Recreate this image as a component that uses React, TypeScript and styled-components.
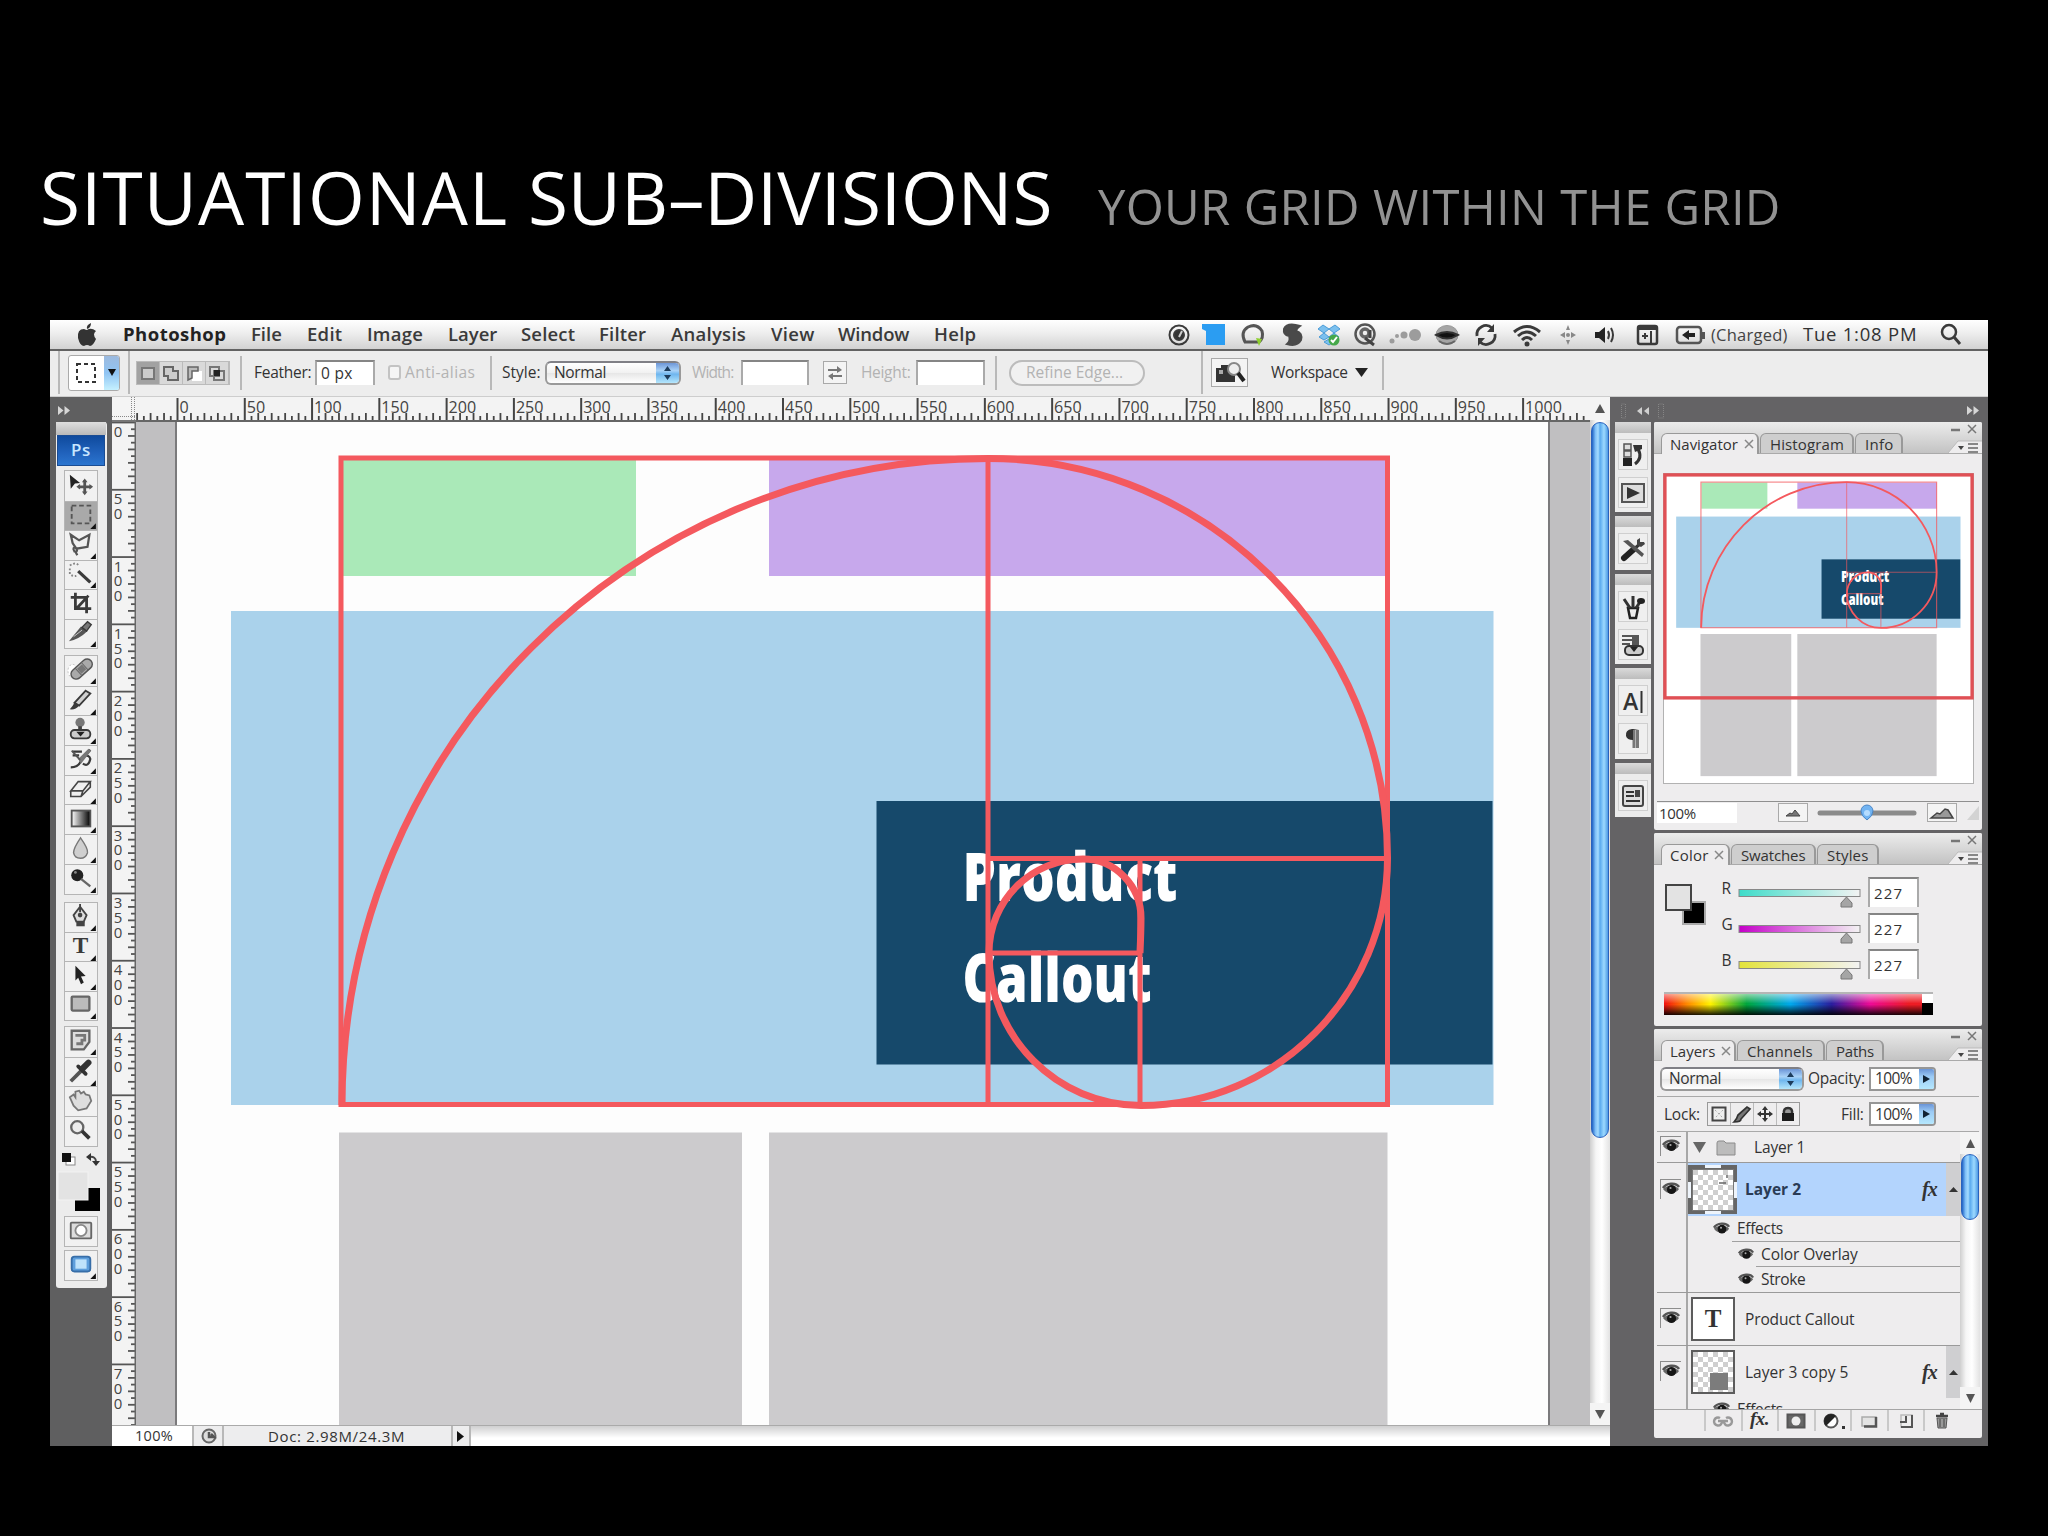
import React, { useLayoutEffect, useRef, useState, ReactNode } from "react";
import styled, { createGlobalStyle, css } from "styled-components";

const Global = createGlobalStyle`
  html, body { margin: 0; padding: 0; background: #000; }
  * { box-sizing: border-box; }
  body { font-family: "Open Sans", "Noto Sans", sans-serif; overflow: hidden; }
  svg { display: block; flex: none; overflow: visible; }
`;

/* ---------- text that tracks out to a given measure ---------- */
const FitSpan = styled.span<{ $size: number; $weight?: number; $color?: string; $gap?: number; $w: number }>`
  display: block;
  flex: none;
  width: ${(p) => p.$w}px;
  margin-left: ${(p) => p.$gap ?? 0}px;
  font-size: ${(p) => p.$size}px;
  font-weight: ${(p) => p.$weight ?? 400};
  color: ${(p) => p.$color ?? "#333"};
  line-height: 1.2;
  white-space: nowrap;
  & > span { display: inline-block; }
`;

type FitProps = { w: number; size?: number; weight?: number; color?: string; gap?: number; children: string };
function Fit({ w, size = 15.5, weight = 500, color, gap, children }: FitProps) {
  const ref = useRef<HTMLSpanElement>(null);
  const [tracking, setTracking] = useState(0);
  useLayoutEffect(() => {
    if (ref.current) setTracking((w - ref.current.offsetWidth) / (children.length - 0.5));
  }, [w, children]);
  return (
    <FitSpan $w={w} $size={size} $weight={weight} $color={color} $gap={gap}>
      <span ref={ref} style={{ letterSpacing: tracking }}>{children}</span>
    </FitSpan>
  );
}

/* ---------- frame ---------- */
const Slide = styled.main`
  width: 2048px;
  height: 1536px;
  background: #000;
  display: flex;
  flex-direction: column;
`;
const Heading = styled.header`
  height: 320px;
  padding: 152.5px 0 0 40px;
  display: flex;
  align-items: baseline;
`;
const Screen = styled.section`
  width: 1938px;
  height: 1126px;
  margin-left: 50px;
  display: flex;
  flex-direction: column;
  overflow: hidden;
  background: #5f5f60;
`;
const MenuBar = styled.nav`
  height: 31px;
  flex: none;
  display: flex;
  align-items: center;
  background: linear-gradient(#fff, #eee 45%, #d2d2d2);
  border-bottom: 2px solid #626262;
`;
const OptionsBar = styled.div`
  height: 46px;
  flex: none;
  display: flex;
  align-items: center;
  padding-bottom: 2px;
  background: #ededed;
  border-bottom: 1px solid #cdcdcd;
`;
const Item = styled.div<{ $gap?: number; $w?: number }>`
  flex: none;
  display: flex;
  justify-content: center;
  align-items: center;
  margin-left: ${(p) => p.$gap ?? 0}px;
  width: ${(p) => (p.$w ? p.$w + "px" : "auto")};
`;
const Divider = styled.div<{ $gap: number; $h?: number }>`
  flex: none;
  width: 2px;
  height: ${(p) => p.$h ?? 34}px;
  margin-left: ${(p) => p.$gap}px;
  background: #b9b9b9;
`;
const Field = styled.div<{ $gap?: number; $w: number; $h?: number }>`
  flex: none;
  display: flex;
  align-items: center;
  padding-left: 4px;
  width: ${(p) => p.$w}px;
  height: ${(p) => p.$h ?? 25}px;
  margin-left: ${(p) => p.$gap ?? 0}px;
  background: #fff;
  border: 2px solid #aaa;
  border-top-color: #858585;
  border-bottom: 0;
`;
const Select = styled.div<{ $gap?: number; $w: number }>`
  flex: none;
  display: flex;
  align-items: center;
  width: ${(p) => p.$w}px;
  height: 24px;
  margin-left: ${(p) => p.$gap ?? 0}px;
  padding-left: 7px;
  border: 2px solid #9a9a9a;
  border-top-color: #808086;
  border-radius: 6px;
  background: linear-gradient(#fff, #f1f1f1 50%, #e6e6e6 51%, #fff);
  overflow: hidden;
`;
const Stepper = styled.div`
  margin-left: auto;
  width: 23px;
  height: 24px;
  flex: none;
  display: grid;
  place-items: center;
  background: linear-gradient(#5d86cf, #a9d2f7 40%, #6fb6ee 55%, #c5f1ff);
`;
const ToolPreset = styled.div`
  width: 52px;
  height: 36px;
  margin-left: 8px;
  flex: none;
  display: flex;
  align-items: center;
  border: 1px solid #aaa;
  border-radius: 3px;
  background: #fff;
  overflow: hidden;
`;
const PresetArrow = styled.div`
  width: 15px;
  height: 36px;
  margin-left: auto;
  display: grid;
  place-items: center;
  background: linear-gradient(#9db9dd, #8fc4f3 50%, #c9f3ff);
`;
const ModeGroup = styled.div`
  display: flex;
  width: 94px;
  height: 24px;
  margin-left: 6px;
  flex: none;
  border: 1px solid #bbb;
`;
const ModeCell = styled.div<{ $on?: boolean }>`
  flex: 1;
  display: grid;
  place-items: center;
  border-right: 1px solid #bbb;
  background: ${(p) => (p.$on ? "#a2a2a2" : "#d9d9d9")};
`;
const CheckBox = styled.div`
  width: 13px;
  height: 15px;
  flex: none;
  margin-left: 13px;
  border: 2px solid #c3c3c3;
  border-radius: 3px;
  background: #f5f5f5;
`;
const IconBox = styled.div<{ $gap: number; $w: number; $h: number }>`
  width: ${(p) => p.$w}px;
  height: ${(p) => p.$h}px;
  margin-left: ${(p) => p.$gap}px;
  flex: none;
  display: grid;
  place-items: center;
  border: 1px solid #a9a9a9;
  background: #f4f4f4;
`;
const Pill = styled.div`
  width: 136px;
  height: 26px;
  margin-left: 12px;
  padding-left: 15px;
  flex: none;
  display: flex;
  align-items: center;
  border: 2px solid #bcbcbc;
  border-radius: 13px;
  background: #f1f1f1;
`;

const Body = styled.div`
  flex: 1;
  display: flex;
  min-height: 0;
`;
const ToolDock = styled.aside`
  width: 62px;
  flex: none;
  padding-left: 6px;
  background: #5f5f60;
`;
const DockHead = styled.div<{ $pl?: number }>`
  height: 25px;
  display: flex;
  align-items: center;
  padding: 2px 5px 0 ${(p) => p.$pl ?? 0}px;
`;
const ToolPanel = styled.div`
  width: 51px;
  height: 866px;
  background: #ececec;
  border-radius: 3px;
  display: flex;
  flex-direction: column;
  align-items: center;
  padding-right: 1px;
`;
const PanelGrip = styled.div`
  width: 100%;
  height: 13px;
  flex: none;
  background: linear-gradient(#dedede, #b9b9b9);
`;
const PsBadge = styled.div`
  width: 48px;
  height: 31px;
  flex: none;
  display: grid;
  place-items: center;
  background: linear-gradient(#0f4a9d, #2163bd 60%, #2b75cf);
  border: 1px solid #1a4c93;
`;
const ToolGroup = styled.div<{ $gap: number }>`
  width: 34px;
  margin-top: ${(p) => p.$gap}px;
  border: 1px solid #b5b5b5;
  flex: none;
`;
const ToolCell = styled.div<{ $h: number; $on?: boolean }>`
  height: ${(p) => p.$h}px;
  display: flex;
  align-items: center;
  justify-content: center;
  padding: 0 1px 2px 0;
  background: ${(p) => (p.$on ? "#a9a9a9" : "#f1f1f1")};
  & + & { border-top: 1px solid #b5b5b5; }
`;
const SwapRow = styled.div`
  display: flex;
  justify-content: space-between;
  width: 38px;
  margin-top: 6px;
  flex: none;
`;
const Swatches = styled.div`
  margin-top: 5px;
  flex: none;
`;

const DocWindow = styled.section`
  width: 1498px;
  flex: none;
  display: flex;
  flex-direction: column;
`;
const DocRow = styled.div<{ $h: number }>`
  height: ${(p) => p.$h}px;
  flex: none;
  display: flex;
  overflow: hidden;
`;
const Pasteboard = styled.div`
  width: 1454px;
  height: 1005px;
  flex: none;
  display: flex;
  justify-content: space-between;
  background: #c0bfc1;
  padding: 0 40px 0 39px;
`;
const Sheet = styled.div`
  width: 1376px;
  border: solid #7b7a7c;
  border-width: 0 2px;
  background: #fdfdfd;
  overflow: hidden;
`;
const ScrollTrack = styled.div`
  width: 20px;
  flex: none;
  display: flex;
  flex-direction: column;
  background: linear-gradient(90deg, #cfcfcf, #f6f6f6 30%, #fff 60%, #e2e2e2);
`;
const ScrollThumb = styled.div<{ $h: number }>`
  width: 18px;
  height: ${(p) => p.$h}px;
  margin: 0 auto;
  border-radius: 9px;
  border: 1px solid #2a62bd;
  background: linear-gradient(90deg, #1f62c4, #7fc0f8 22%, #a6dcff 38%, #59a9ee 50%, #9cd9ff 75%, #4d9ae4);
  flex: none;
`;
const ScrollArrow = styled.div<{ $push?: boolean; $h?: number }>`
  height: ${(p) => p.$h ?? 22}px;
  flex: none;
  width: 100%;
  margin-top: ${(p) => (p.$push ? "auto" : 0)};
  display: grid;
  place-items: center;
  background: #f4f4f4;
`;
const StatusBar = styled.footer`
  height: 21px;
  flex: none;
  display: flex;
  align-items: stretch;
  border-top: 1px solid #aaa;
  background: linear-gradient(#cfcfd0, #fff 60%);
`;
const StatusCell = styled.div<{ $w: number; $bg?: string; $pl?: number }>`
  width: ${(p) => p.$w}px;
  padding-left: ${(p) => p.$pl ?? 0}px;
  display: flex;
  align-items: center;
  background: ${(p) => p.$bg ?? "#ededee"};
  border-right: 2px solid #b8b8b8;
  flex: none;
`;

const RightDock = styled.aside`
  flex: 1;
  display: flex;
  flex-direction: column;
  background: #646365;
`;
const DockCols = styled.div`
  display: flex;
  align-items: flex-start;
  padding-left: 5px;
  gap: 2px;
`;
const IconStrip = styled.div`
  width: 37px;
  flex: none;
  display: flex;
  flex-direction: column;
  gap: 4px;
`;
const StripGroup = styled.div<{ $h: number }>`
  width: 36px;
  height: ${(p) => p.$h}px;
  background: #ececec;
  display: flex;
  flex-direction: column;
  align-items: center;
  justify-content: flex-start;
  gap: 7px;
`;
const StripGrip = styled.div`
  width: 100%;
  height: 11px;
  margin-bottom: -1px;
  flex: none;
  background: linear-gradient(#dadada, #bcbcbc);
`;
const StripButton = styled.div`
  width: 30px;
  height: 31px;
  flex: none;
  display: grid;
  place-items: center;
  border: 1px solid #cfcfcf;
  background: #efefef;
`;
const Panels = styled.div`
  width: 328px;
  flex: none;
  display: flex;
  flex-direction: column;
  gap: 3px;
`;
const Panel = styled.section<{ $h: number }>`
  height: ${(p) => p.$h}px;
  flex: none;
  background: #eeedee;
  display: flex;
  flex-direction: column;
  border-radius: 2px;
  overflow: hidden;
`;
const TabStrip = styled.div`
  height: 32px;
  flex: none;
  display: flex;
  align-items: flex-end;
  padding-left: 7px;
  background: linear-gradient(#ececec, #c3c3c3);
  border-bottom: 1px solid #aaa;
`;
const Tab = styled.div<{ $w: number; $on?: boolean }>`
  width: ${(p) => p.$w}px;
  height: ${(p) => (p.$on ? 21 : 20)}px;
  margin-right: 1px;
  margin-bottom: ${(p) => (p.$on ? -1 : 0)}px;
  flex: none;
  display: flex;
  align-items: center;
  gap: 6px;
  padding-left: ${(p) => (p.$on ? 8 : 9)}px;
  border: 1px solid #999;
  border-width: 1px 2px 0 1px;
  border-radius: 6px 6px 0 0;
  background: ${(p) => (p.$on ? "#eeedee" : "#cecece")};
`;
const TabTail = styled.div`
  margin-left: auto;
  height: 32px;
`;
const NavThumb = styled.div`
  width: 311px;
  height: 311px;
  margin: 19px 0 0 9px;
  border: 1px solid #b2b2b2;
  background: #fff;
  flex: none;
`;
const NavFooter = styled.div`
  height: 22px;
  margin: 17px 3px 0 3px;
  display: flex;
  align-items: center;
  border-top: 1px solid #8f8f8f;
`;
const ZoomField = styled.div`
  width: 80px;
  height: 20px;
  flex: none;
  background: #fff;
  display: flex;
  align-items: center;
  padding-left: 2px;
`;
const ColorBody = styled.div`
  display: flex;
  height: 126px;
  padding: 12px 0 0 10px;
`;
const ColorRows = styled.div`
  margin-left: 10px;
  display: flex;
  flex-direction: column;
  gap: 6px;
`;
const ColorRow = styled.div`
  display: flex;
  height: 30px;
  align-items: center;
`;
const ChannelLabel = styled.div`
  width: 16px;
  height: 26px;
  display: grid;
  place-items: start center;
`;
const Spectrum = styled.div`
  width: 269px;
  height: 23px;
  margin-left: 10px;
  margin-top: 1px;
  display: flex;
  border-top: 2px solid #b5b5b5;
`;
const Hues = styled.div`
  flex: 1;
  background: linear-gradient(rgba(255,255,255,.55), rgba(255,255,255,0) 45%, rgba(0,0,0,0) 50%, rgba(0,0,0,.9)),
    linear-gradient(90deg, #f01010, #ff8a00 9%, #fff200 18%, #00a63c 32%, #00a8ec 49%, #2a1e9e 65%, #ee0a96 80%, #ee1c24 95%);
`;
const SpectrumEnds = styled.div`
  width: 11px;
  background: linear-gradient(#fff 45%, #000 45%);
`;
const LayerControls = styled.div<{ $h: number }>`
  height: ${(p) => p.$h}px;
  flex: none;
  margin: 0 3px;
  display: flex;
  align-items: center;
  border-bottom: 1px solid #a9a9a9;
`;
const PercentBox = styled.div<{ $gap: number }>`
  width: 67px;
  height: 24px;
  margin-left: ${(p) => p.$gap}px;
  padding-left: 4px;
  flex: none;
  display: flex;
  align-items: center;
  border: 2px solid #969696;
  border-radius: 0 4px 4px 0;
  background: #fff;
  overflow: hidden;
`;
const PercentArrow = styled.div`
  margin-left: auto;
  width: 15px;
  height: 24px;
  display: grid;
  place-items: center;
  background: linear-gradient(#5d86cf, #9ccbf5 40%, #b9ecff);
`;
const LockGroup = styled.div`
  display: flex;
  width: 93px;
  height: 24px;
  margin-left: 7px;
  border: 1px solid #999;
  flex: none;
`;
const LockCell = styled.div`
  flex: 1;
  display: grid;
  place-items: center;
  & + & { border-left: 1px solid #bbb; }
`;
const LayerArea = styled.div`
  height: 278px;
  flex: none;
  display: flex;
  padding-left: 3px;
  overflow: hidden;
  border-bottom: 1px solid #a5a5a5;
`;
const LayerList = styled.div`
  width: 303px;
  flex: none;
  display: flex;
  flex-direction: column;
`;
const LayerRow = styled.div<{ $h: number }>`
  height: ${(p) => p.$h}px;
  flex: none;
  display: flex;
  border-bottom: 1px solid #9a9a9a;
`;
const EyeCol = styled.div<{ $pad?: number }>`
  width: 31px;
  flex: none;
  border-right: 2px solid #a7a7a7;
  padding: ${(p) => p.$pad ?? 4}px 0 0 3px;
`;
const EyeBox = styled.div`
  width: 21px;
  height: 20px;
  display: grid;
  place-items: center;
  border: solid #8d8d8d;
  border-width: 1px 0 0 1px;
`;
const LayerMain = styled.div`
  flex: 1;
  display: flex;
  flex-direction: column;
`;
const LayerBar = styled.div<{ $h: number; $on?: boolean; $pl?: number }>`
  height: ${(p) => p.$h}px;
  flex: none;
  display: flex;
  align-items: center;
  padding-left: ${(p) => p.$pl ?? 0}px;
  background: ${(p) => (p.$on ? "#b3d4fd" : "transparent")};
`;
const EffectRow = styled.div<{ $indent: number; $line?: boolean; $h?: number }>`
  height: ${(p) => p.$h ?? 25}px;
  flex: none;
  display: flex;
  align-items: center;
  gap: 7px;
  margin-left: ${(p) => p.$indent}px;
  ${(p) => p.$line && css`border-top: 1px solid #a0a0a0;`}
`;
const FxTag = styled.span`
  margin-left: auto;
  width: 24px;
  font: italic bold 20px "Liberation Serif", serif;
  letter-spacing: -1px;
  color: #333;
`;
const FxToggle = styled.div`
  width: 14px;
  height: 100%;
  display: grid;
  place-items: center;
  background: #cfcfd1;
`;
const Thumb = styled.div`
  width: 44px;
  height: 44px;
  margin-left: 3px;
  flex: none;
  display: grid;
  place-items: center;
  border: 2px solid #5c5c5c;
  background: #fff;
  font: bold 25px "Liberation Serif", serif;
  color: #333;
`;
const LayerFooter = styled.div`
  height: 21px;
  padding-left: 50px;
  display: flex;
  flex: none;
`;
const FooterCell = styled.div`
  width: 36.5px;
  display: grid;
  place-items: center;
  border-left: 2px solid #c9c9c9;
`;

/* ---------- glyphs ---------- */
const Tri = ({ d, w = 10, h = 9, c = "#333" }: { d: "up" | "down" | "right"; w?: number; h?: number; c?: string }) => (
  <svg width={w} height={h} viewBox="0 0 10 10" preserveAspectRatio="none">
    <path fill={c} d={d === "up" ? "M5 0L10 10H0Z" : d === "down" ? "M0 0H10L5 10Z" : "M0 0L10 5L0 10Z"} />
  </svg>
);
const Twist = () => (
  <svg width="9" height="16" viewBox="0 0 9 16"><path fill="#1d3c5c" d="M4.500 1L8 6H1ZM1 10H8L4.500 15Z" /></svg>
);
const Chevrons = () => (
  <svg width="12" height="9" viewBox="0 0 12 9"><path fill="#d6d6d6" d="M0 0L5.500 4.500L0 9ZM6.500 0L12 4.500L6.500 9Z" /></svg>
);
const Eye = ({ w = 18 }: { w?: number }) => (
  <svg width={w} height={w * 0.78} viewBox="0 0 18 14">
    <path d="M1 6C4 1 14 0 17 5" fill="none" stroke="#555" strokeWidth="2.500" />
    <path d="M1 7C4 3 14 3 17 7C14 12 5 13 1 7Z" fill="#666" />
    <circle cx="9.500" cy="7.500" r="4.600" fill="#161616" /><circle cx="8.500" cy="6" r="1.100" fill="#aaa" />
  </svg>
);
const CloseX = () => (
  <svg width="10" height="10" viewBox="0 0 10 10"><path d="M1 1L9 9M9 1L1 9" stroke="#888" strokeWidth="1.500" /></svg>
);

const K = "#3a3a3a";
const toolGlyphs: Record<string, ReactNode> = {
  move: <><path d="M5 4L16 13L10.500 13.500L6 19Z" fill="#222" /><path d="M21 10V24M14 17H28" stroke="#555" strokeWidth="3" /><path d="M21 8L24 12H18ZM21 26L24 22H18ZM12 17L16 14V20ZM30 17L26 14V20Z" fill="#555" /></>,
  marquee: <rect x="7" y="5" width="20" height="19" fill="none" stroke="#555" strokeWidth="2" strokeDasharray="5 3" />,
  lasso: <path d="M6 4L15 10L26 4L24 17L12 19L8 13ZM12 18Q7 17 10 22Q14 23 12 18M11 22L13 26" fill="none" stroke="#555" strokeWidth="2.400" />,
  wand: <><path d="M14 12L27 24" stroke={K} strokeWidth="3.500" /><path d="M5 6Q12 1 15 7M5 9V15Q8 18 12 17" fill="none" stroke="#888" strokeWidth="2" strokeDasharray="2 2" /></>,
  crop: <path d="M11 3V20H28M6 8H23V25M13 19L25 6" fill="none" stroke={K} strokeWidth="3" />,
  slice: <><path d="M4 24L17 8L24 13Q15 22 4 24Z" fill="#555" /><path d="M18 9L24 3L28 6L23 13Z" fill="#777" stroke={K} strokeWidth="1.500" /><path d="M9 19L18 12" stroke="#ccc" /></>,
  heal: <><ellipse cx="8" cy="16" rx="5" ry="7" fill="#fff" stroke="#bbb" strokeDasharray="2 2" /><g transform="rotate(-42 17 14)"><rect x="4" y="9" width="27" height="11" rx="5.500" fill="#aaa" stroke="#555" strokeWidth="1.500" /><path d="M13 9V20M22 9V20" stroke="#666" /><rect x="14" y="11" width="7" height="7" fill="#777" /></g></>,
  brush: <><path d="M22 4L27 7L15 20L10 17Z" fill="#d0d0d0" stroke={K} strokeWidth="2" /><path d="M10 17L15 20Q11 25 5 24Q8 21 10 17Z" fill={K} /></>,
  stamp: <><circle cx="16" cy="7" r="5" fill="#777" /><path d="M14 11H18V17H14Z" fill="#444" /><rect x="6" y="15" width="21" height="9" rx="4" fill="#ccc" stroke={K} strokeWidth="2" /><path d="M12 17H21L16.500 22Z" fill="#222" /></>,
  history: <><path d="M8 6H18M8 10H15M6 23Q14 23 17 16L27 4M19 19Q25 23 27 14Q26 9 20 11" fill="none" stroke={K} strokeWidth="2.400" /><path d="M14 14L25 3L28 5L17 19Z" fill="#777" /><path d="M7 5L16 15" stroke="#555" strokeWidth="2" /></>,
  eraser: <path d="M14 6H27L19 16H6ZM6 16V22H17L27 12V6M19 16L17 22" fill="#eee" stroke="#444" strokeWidth="1.700" />,
  blur: <path d="M16.500 3Q25 15 24 19Q22 25 16.500 25Q10 25 9 19Q9 14 16.500 3Z" fill="#cfcfcf" stroke="#777" strokeWidth="1.500" />,
  dodge: <><circle cx="13" cy="11" r="6.500" fill="#222" /><path d="M17 15L27 23" stroke="#666" strokeWidth="2.500" /><circle cx="11" cy="8" r="1.500" fill="#888" /></>,
  pen: <><path d="M16 1V10M12 20L9 13L16 4L23 13L20 20Z" fill="#ddd" stroke="#444" strokeWidth="2" /><rect x="12" y="20" width="9" height="5" fill="#444" /><circle cx="16" cy="13" r="2.500" fill="#444" /></>,
  type: <text x="16.500" y="22" textAnchor="middle" fontFamily="Liberation Serif, serif" fontWeight="bold" fontSize="25" fill={K}>T</text>,
  path: <path d="M11 4L22 15L17 15.500L20 22L17 24L14 17L11 20Z" fill="#222" />,
  shape: <rect x="7" y="6" width="19" height="15" rx="1" fill="#bbb" stroke="#666" strokeWidth="2.500" />,
  notes: <><path d="M7 4H26V16L20 24H7Z" fill="#ddd" stroke="#666" strokeWidth="2.500" /><path d="M11 9H21V14H18V18H12" fill="none" stroke="#777" strokeWidth="3" /></>,
  dropper: <><path d="M6 25L18 13" stroke="#555" strokeWidth="4" /><path d="M14 9L22 17" stroke="#333" strokeWidth="4" strokeLinecap="round" /><path d="M19 11L25 5" stroke="#333" strokeWidth="6.500" strokeLinecap="round" /></>,
  hand: <path d="M5 11L9 8L11 11L11 5L15 4L17 7L20 5L22 8L26 9L28 15L23 23L14 25L9 20Z" fill="#dedede" stroke="#777" strokeWidth="1.900" />,
  zoom: <><circle cx="13" cy="11" r="6.500" fill="#ededed" stroke="#666" strokeWidth="2.500" /><path d="M18 15L26 23" stroke="#333" strokeWidth="4" /></>,
  mask: <><rect x="6" y="6" width="22" height="17" rx="1" fill="#ddd" stroke="#666" strokeWidth="2" /><circle cx="17" cy="14.500" r="6" fill="#fff" stroke="#888" strokeWidth="2" /></>,
  screen: <><rect x="7" y="6" width="20" height="16" rx="3" fill="#5e9fdc" stroke="#376ea8" strokeWidth="2" /><rect x="11" y="9" width="12" height="10" fill="#bfe3fb" /></>,
};
const ToolIcon = ({ name, corner = true }: { name: string; corner?: boolean }) => (
  <svg width="32" height="27" viewBox="0 0 34 29">
    {name === "gradient" ? (
      <><defs><linearGradient id="bw"><stop offset="0" stopColor="#fff" /><stop offset="1" stopColor="#000" /></linearGradient></defs>
        <rect x="7" y="6" width="20" height="17" fill="url(#bw)" stroke="#555" strokeWidth="2" /></>
    ) : toolGlyphs[name]}
    {corner && <path d="M33 24V30H27Z" fill="#111" />}
  </svg>
);
const groups: { gap: number; h: number; tools: string[] }[] = [
  { gap: 4, h: 29.5, tools: ["move", "marquee", "lasso", "wand", "crop", "slice"] },
  { gap: 6, h: 29.7, tools: ["heal", "brush", "stamp", "history", "eraser", "gradient", "blur", "dodge"] },
  { gap: 7, h: 29.4, tools: ["pen", "type", "path", "shape"] },
  { gap: 5, h: 29.7, tools: ["notes", "dropper", "hand", "zoom"] },
];

/* ---------- the document being edited ---------- */
const RED = "#f4595e";
function Artwork({ width, height, viewBox, thin }: { width: number; height: number; viewBox: string; thin?: boolean }) {
  return (
    <svg width={width} height={height} viewBox={viewBox}>
      <rect x="343" y="460" width="293" height="116" fill="#aae9b8" />
      <rect x="769" y="460" width="619" height="116" fill="#c7a8ec" />
      <rect x="231" y="611" width="1262.500" height="494" fill="#aad2eb" />
      <rect x="876.500" y="801" width="616" height="263.500" fill="#16496b" />
      <rect x="339" y="1132.500" width="403" height="631" fill="#cccbcd" />
      <rect x="769" y="1132.500" width="618.500" height="631" fill="#cccbcd" />
      <g fill="#fff" fontFamily="Open Sans, sans-serif" fontWeight="800" fontSize="67">
        <text x="962.500" y="901" textLength="215" lengthAdjust="spacingAndGlyphs">Product</text>
        <text x="962.500" y="1002" textLength="189" lengthAdjust="spacingAndGlyphs">Callout</text>
      </g>
      <g fill="none" stroke={RED} strokeWidth="5">
        <rect x="341" y="458" width="1046.500" height="646.500" opacity={thin ? 0.75 : 1} />
        <path d="M988 458V1104M988 858.500H1387M1140 858V1104M988 953H1140" opacity={thin ? 0.6 : 1} />
        <path strokeWidth={thin ? 8 : 7} d="M342 1105C342 748 631 458.500 988 458.500C1208 458.500 1387.500 638 1387.500 858C1387.500 994 1277 1105.500 1141 1105.500C1057 1105.500 989 1037 989 953C989 901 1031 859 1083 859C1115 859 1141 886 1141 918Q1141 930 1140 953" />
      </g>
      {thin && <rect x="181" y="426" width="1364" height="990" fill="none" stroke="#e05055" strokeWidth="15" />}
    </svg>
  );
}

const STEP = 67.28;
function RulerX() {
  const out: ReactNode[] = [];
  for (let i = -6; i <= 213; i++) {
    const x = 41.5 + (i * STEP) / 10;
    if (x < 1 || x > 1452) continue;
    const major = i % 10 === 0;
    out.push(<path key={i} d={`M${x} ${major ? 1 : i % 2 ? 19 : 16}V24`} stroke="#444" strokeWidth={major ? 2 : 1.8} />);
    if (major && i >= 0 && i <= 200) out.push(<text key={"t" + i} x={x + 2} y="15.500" textLength={String(i * 5).length * 9.2} lengthAdjust="spacingAndGlyphs">{i * 5}</text>);
  }
  return (
    <svg width="1454" height="25" viewBox="0 0 1454 25" fontFamily="Open Sans, sans-serif" fontSize="16" fontWeight="500" fill="#444">
      <rect width="1454" height="25" fill="#f3f3f3" />{out}<rect y="23" width="1454" height="2" fill="#666" />
    </svg>
  );
}
function RulerY() {
  const out: ReactNode[] = [];
  for (let i = 0; i < 150; i++) {
    const y = 0.5 + (i * STEP) / 10;
    if (y > 1003) break;
    const major = i % 10 === 0;
    out.push(<path key={i} d={`M${major ? 0 : i % 2 ? 19 : 16} ${y}H24`} stroke="#555" strokeWidth="1.800" />);
    if (major) out.push(
      <text key={"t" + i} y={y + 14.5} textAnchor="middle">
        {String(i * 5).split("").map((c, n) => <tspan key={n} x="6" dy={n ? 14.8 : 0}>{c}</tspan>)}
      </text>
    );
  }
  return (
    <svg width="24" height="1003" viewBox="0 0 24 1003" fontFamily="Open Sans, sans-serif" fontSize="15" fontWeight="500" fill="#444">
      <rect width="24" height="1003" fill="#f3f3f3" />{out}<rect x="22.500" width="1.500" height="1003" fill="#666" />
    </svg>
  );
}

/* ---------- menu bar ---------- */
const menus: [string, number, number][] = [
  ["File", 25, 31], ["Edit", 25, 35], ["Image", 25, 56], ["Layer", 25, 49], ["Select", 24, 54], ["Filter", 24, 47],
  ["Analysis", 25, 75], ["View", 25, 43], ["Window", 24, 71], ["Help", 25, 42],
];
const G = ({ children, w = 26 }: { children: ReactNode; w?: number }) => (
  <svg width={w} height="26" viewBox={`0 0 ${w} 26`} fill="none" stroke={K} strokeWidth="2">{children}</svg>
);
const extras: [number, number, ReactNode][] = [
  [190, 26, <><circle cx="13" cy="13" r="9.500" /><circle cx="13" cy="13" r="5" fill="#333" /><path d="M13 15L16 9" stroke="#ccc" /></>],
  [9, 26, <path d="M1 2H24V23H5V9L1 7Z" fill="#2b9df2" stroke="none" />],
  [13, 26, <><path d="M5 20Q0 10 8 5Q17 1 22 9Q24 16 19 20H4" strokeWidth="3" stroke="#555" /><path d="M16 16L22 17L19 24Z" fill="#8ed02e" stroke="none" /></>],
  [13, 26, <path d="M21 4Q8 0 5 7Q4 13 10 14Q12 19 8 22Q18 25 22 18Q24 11 17 9Q18 6 21 4Z" fill="#4a4a4a" stroke="#4a4a4a" />],
  [11, 26, <><path d="M7 3L13 7L8 11L2 7ZM19 3L24 7L18 11L13 7ZM8 11L13 15L8 18L3 15ZM18 11L23 15L18 18L13 15ZM8 20L13 17L18 20L13 23Z" fill="#7cc0ee" stroke="#4b9cd8" strokeWidth="1" /><circle cx="18" cy="18" r="5.500" fill="#45a849" stroke="none" /><path d="M15 18L17 20L21 15" stroke="#fff" /></>],
  [10, 26, <><circle cx="13" cy="12" r="9.500" stroke="#555" strokeWidth="2.500" /><circle cx="13" cy="11" r="4" strokeWidth="3.500" stroke="#666" /><path d="M13 16Q18 20 22 23M18 8V16" stroke="#444" strokeWidth="3" /></>],
  [10, 34, <g fill="#9c9c9c" stroke="none"><circle cx="4" cy="19" r="2.500" /><circle cx="9" cy="14" r="2" /><circle cx="16" cy="13" r="3.500" /><circle cx="27" cy="13" r="6" /></g>],
  [11, 28, <><ellipse cx="14" cy="13" rx="11" ry="9.500" fill="#a5a5a5" stroke="#999" strokeWidth="1" /><path d="M3 13Q14 7 25 13Q14 20 3 13Z" fill="#111" stroke="#333" /><path d="M6 19Q14 25 22 19" stroke="#666" /></>],
  [12, 26, <><path d="M4 14A9 9 0 0 1 19 6M22 12A9 9 0 0 1 7 20" strokeWidth="2.800" /><path d="M21 2V10H14ZM5 24V16H12Z" fill={K} stroke="none" /></>],
  [13, 30, <><path d="M2 10Q15 -1 28 10M6 14Q15 6 24 14M10 18Q15 13 20 18" strokeWidth="3" /><circle cx="15" cy="22" r="2.500" fill={K} stroke="none" /></>],
  [15, 22, <g fill="#888" stroke="none"><path d="M11 3L13 8H9ZM11 23L13 18H9ZM3 13L8 10V16ZM19 13L14 10V16Z" /><circle cx="11" cy="13" r="2" /></g>],
  [12, 26, <><path d="M4 10H8L14 5V21L8 16H4Z" fill="#222" stroke="none" /><path d="M17 9Q19 13 17 17M20 6Q24 13 20 20" /></>],
  [18, 26, <><rect x="3" y="4" width="19" height="18" rx="2" strokeWidth="2.500" /><path d="M4 6H21" strokeWidth="4" /><path d="M7 14H13M10 11V17M16 9V21" strokeWidth="2" /></>],
  [14, 30, <><rect x="2" y="5" width="24" height="16" rx="3" stroke="#555" strokeWidth="2.500" /><path d="M27 10V16H29V10" stroke="#555" /><path d="M7 13L14 8V11H20V15H14V18Z" fill="#222" stroke="none" /></>],
];

const Menu = () => (
  <MenuBar>
    <Item $gap={24} $w={26}>
      <svg width="24" height="26" viewBox="0 0 24 26"><path fill="#333" d="M16 1Q16 6 12 7Q11 3 16 1ZM12 8Q16 5 21 9Q17 12 21 17Q18 24 15 24Q12 22 9 24Q5 24 3 16Q2 7 9 7Q11 8 12 8Z" /></svg>
    </Item>
    <Fit gap={23} w={103} size={18.5} weight={700} color="#222">Photoshop</Fit>
    {menus.map(([t, g, w]) => <Fit key={t} gap={g} w={w} size={18.5} weight={600} color="#3a3a3a">{t}</Fit>)}
    {extras.map(([g, w, n], i) => <Item key={i} $gap={g} $w={w}><G w={w}>{n}</G></Item>)}
    <Fit gap={6} w={76} size={16.5} color="#444">(Charged)</Fit>
    <Fit gap={16} w={114} size={18.5} color="#333">Tue 1:08 PM</Fit>
    <Item $gap={22} $w={24}><G w={24}><circle cx="10" cy="10" r="7" strokeWidth="2.500" /><path d="M15 15L21 22" strokeWidth="3" /></G></Item>
  </MenuBar>
);

const Options = () => (
  <OptionsBar>
    <Divider $gap={8} $h={43} />
    <ToolPreset>
      <Item $gap={5} $w={24}><svg width="22" height="22"><rect x="2" y="2" width="18" height="18" fill="none" stroke="#333" strokeWidth="2" strokeDasharray="4 3" /></svg></Item>
      <PresetArrow><Tri d="down" w={8} h={7} c="#111" /></PresetArrow>
    </ToolPreset>
    <Divider $gap={8} $h={43} />
    <ModeGroup>
      <ModeCell $on><svg width="18" height="18"><rect x="3" y="4" width="12" height="11" fill="#ccc" stroke="#777" strokeWidth="2" /></svg></ModeCell>
      <ModeCell><svg width="18" height="18"><path d="M2 3H11V7H16V16H6V12H2Z" fill="#ccc" stroke="#666" strokeWidth="2" /></svg></ModeCell>
      <ModeCell><svg width="18" height="18"><rect x="7" y="7" width="10" height="10" fill="#fff" /><path d="M3 16V3H13V7H7V14Z" fill="#bbb" stroke="#666" strokeWidth="1.500" /></svg></ModeCell>
      <ModeCell><svg width="18" height="18"><path d="M2 3H11V12H2ZM6 7H16V16H6Z" fill="none" stroke="#777" strokeWidth="2" /><rect x="6" y="6" width="6" height="6" fill="#222" /></svg></ModeCell>
    </ModeGroup>
    <Divider $gap={10} />
    <Fit gap={12} w={57}>Feather:</Fit>
    <Field $gap={4} $w={60}><Fit w={32}>0 px</Fit></Field>
    <CheckBox />
    <Fit gap={4} w={70} color="#b3b3b3">Anti-alias</Fit>
    <Divider $gap={15} />
    <Fit gap={10} w={38}>Style:</Fit>
    <Select $gap={5} $w={136}><Fit w={52}>Normal</Fit><Stepper><Twist /></Stepper></Select>
    <Fit gap={11} w={42} color="#b3b3b3">Width:</Fit>
    <Field $gap={7} $w={68} />
    <IconBox $gap={14} $w={24} $h={23}><svg width="18" height="18"><path d="M2 6H13M5 12H16" stroke="#777" strokeWidth="2" /><path d="M11 2L16 6L11 9ZM7 9L2 12L7 16Z" fill="#777" /></svg></IconBox>
    <Fit gap={14} w={50} color="#b3b3b3">Height:</Fit>
    <Field $gap={5} $w={69} />
    <Divider $gap={10} />
    <Pill><Fit w={97} color="#b3b3b3">Refine Edge...</Fit></Pill>
    <Divider $gap={56} $h={43} />
    <IconBox $gap={8} $w={37} $h={29}>
      <svg width="33" height="26"><path d="M3 8H8V5H16V8H22V22H3Z" fill="#333" /><rect x="6" y="10" width="4" height="4" fill="#aaa" /><circle cx="21" cy="9" r="6" fill="#eee" stroke="#888" strokeWidth="2" /><path d="M25 13L31 21" stroke="#222" strokeWidth="4" /></svg>
    </IconBox>
    <Fit gap={23} w={77}>Workspace</Fit>
    <Item $gap={7}><Tri d="down" w={13} h={9} c="#222" /></Item>
    <Divider $gap={14} />
  </OptionsBar>
);

const Tools = () => (
  <ToolDock>
    <DockHead $pl={2}><Chevrons /></DockHead>
    <ToolPanel>
      <PanelGrip />
      <PsBadge><Fit w={20} size={17} weight={600} color="#c8e6ff">Ps</Fit></PsBadge>
      {groups.map((g) => (
        <ToolGroup key={g.gap + g.tools[0]} $gap={g.gap}>
          {g.tools.map((t) => <ToolCell key={t} $h={g.h} $on={t === "marquee"}><ToolIcon name={t} corner={!["move", "crop", "hand", "zoom"].includes(t)} /></ToolCell>)}
        </ToolGroup>
      ))}
      <SwapRow>
        <svg width="15" height="13"><rect x="4" y="4" width="9" height="8" fill="#fff" stroke="#888" /><rect x="0" y="0" width="9" height="9" fill="#111" /></svg>
        <svg width="14" height="13"><path d="M3 4Q10 3 10 9" fill="none" stroke="#444" strokeWidth="2" /><path d="M5 0V8L0 4ZM6 8H14L10 13Z" fill="#333" /></svg>
      </SwapRow>
      <Swatches>
        <svg width="46" height="42"><path d="M17 17H42V40H17Z" fill="#000" /><rect x="0" y="1" width="30" height="28" fill="#e3e3e3" stroke="#f2f2f2" /></svg>
      </Swatches>
      <ToolGroup $gap={3}><ToolCell $h={29}><ToolIcon name="mask" corner={false} /></ToolCell></ToolGroup>
      <ToolGroup $gap={3}><ToolCell $h={29}><ToolIcon name="screen" /></ToolCell></ToolGroup>
    </ToolPanel>
  </ToolDock>
);

const DocumentView = () => (
  <DocWindow>
    <DocRow $h={25}>
      <svg width="24" height="25"><rect width="24" height="25" fill="#f4f4f4" /><path d="M19.500 0V25M0 19.500H24M22.500 0V25" stroke="#888" strokeDasharray="1 1" /><path d="M0 24H24" stroke="#777" strokeWidth="2" /></svg>
      <RulerX />
      <ScrollTrack><ScrollArrow $h={23}><Tri d="up" c="#555" /></ScrollArrow></ScrollTrack>
    </DocRow>
    <DocRow $h={1003}>
      <RulerY />
      <Pasteboard><Sheet><Artwork width={1372} height={1004} viewBox="177 422 1372 1004" /></Sheet></Pasteboard>
      <ScrollTrack>
        <ScrollThumb $h={716} />
        <ScrollArrow $push><Tri d="down" c="#555" /></ScrollArrow>
      </ScrollTrack>
    </DocRow>
    <StatusBar>
      <StatusCell $w={82} $bg="#fff" $pl={23}><Fit w={38} size={14.5}>100%</Fit></StatusCell>
      <StatusCell $w={30} $pl={7}><svg width="16" height="16"><circle cx="8" cy="8" r="6.500" fill="#ddd" stroke="#666" strokeWidth="2" /><path d="M8 4V9H13L10 6" fill="none" stroke="#555" strokeWidth="2.500" /></svg></StatusCell>
      <StatusCell $w={229} $pl={44}><Fit w={137} size={15}>Doc: 2.98M/24.3M</Fit></StatusCell>
      <StatusCell $w={18} $pl={4}><Tri d="right" w={7} h={11} c="#111" /></StatusCell>
    </StatusBar>
  </DocWindow>
);

const stripIcons: { h: number; icons: ReactNode[] }[] = [
  { h: 90, icons: [
    <svg width="24" height="26"><path d="M3 2H10V8H3ZM3 9H10V15H3Z" fill="#ddd" stroke="#555" strokeWidth="1.500" /><rect x="2" y="16" width="9" height="8" fill="#222" /><path d="M14 22Q22 16 17 7" fill="none" stroke="#333" strokeWidth="3" /><path d="M12 3H21V7L14 10Z" fill="#333" /></svg>,
    <svg width="24" height="22"><rect x="1" y="2" width="22" height="18" fill="#ddd" stroke="#555" strokeWidth="2" /><path d="M6 5L19 11L6 17Z" fill="#333" /></svg> ] },
  { h: 54, icons: [<svg width="26" height="26"><path d="M4 22L14 13" fill="none" stroke="#222" strokeWidth="6" strokeLinecap="round" /><path d="M13 14L21 7" stroke="#333" strokeWidth="3" /><path d="M17 9L17 4L20 2L20 6L24 6L25 8L21 11Z" fill="#444" /><path d="M3 5L8 4L24 18L22 21Z" fill="#555" /></svg>] },
  { h: 90, icons: [
    <svg width="26" height="26"><path d="M8 14H18L16 24H10Z" fill="#eee" stroke="#222" strokeWidth="2.500" /><path d="M10 14L4 5M13 14V2M16 14L22 5" stroke="#333" strokeWidth="3" /><ellipse cx="21" cy="7" rx="4" ry="3" fill="#222" /></svg>,
    <svg width="26" height="26"><path d="M2 4H12M2 8H12M2 12H10" stroke="#555" strokeWidth="2" /><path d="M12 3H19V14H12Z" fill="#555" /><rect x="5" y="14" width="18" height="9" rx="4" fill="#ccc" stroke="#333" strokeWidth="2" /><path d="M10 15H18L14 20Z" fill="#222" /></svg> ] },
  { h: 91, icons: [
    <svg width="24" height="28"><text x="2" y="23" fontFamily="Open Sans, sans-serif" fontSize="23" fontWeight="600" fill="#333">A</text><path d="M20.500 4V26" stroke="#333" strokeWidth="2" /></svg>,
    <svg width="24" height="26"><path d="M16.500 4V22M13 4V22" stroke="#777" strokeWidth="3" /><path d="M18 3H11Q4 4 5 10Q6 14 12 14V4Z" fill="#333" /></svg> ] },
  { h: 54, icons: [<svg width="24" height="24"><rect x="2" y="2" width="20" height="20" rx="2" fill="#ddd" stroke="#444" strokeWidth="2" /><path d="M5 8H13M5 12H13M5 17H19" stroke="#333" strokeWidth="2" /><rect x="14" y="6" width="5" height="7" fill="#444" /></svg>] },
];

function Tabs({ items }: { items: [string, number, number][] }) {
  return (
    <TabStrip>
      {items.map(([t, w, tw], i) => <Tab key={t} $w={w} $on={i === 0}><Fit w={tw} size={15} weight={500}>{t}</Fit>{i === 0 && <CloseX />}</Tab>)}
      <TabTail>
        <svg width="34" height="32"><path d="M0 32L10 20H34V32Z" fill="#eeedee" /><path d="M0 32L10 20H34" fill="none" stroke="#bbb" /><path d="M3 9H12" stroke="#777" strokeWidth="2.500" /><path d="M20 4L28 12M28 4L20 12" stroke="#777" strokeWidth="1.500" /><path d="M10 25H16L13 29Z" fill="#444" /><path d="M20 23H30M20 27H30M20 31H30" stroke="#666" strokeWidth="1.500" /></svg>
      </TabTail>
    </TabStrip>
  );
}

const channels: [string, string][] = [["R", "#3ddcc9"], ["G", "#c400c8"], ["B", "#e3e33a"]];
const ColorSlider = ({ id, color }: { id: string; color: string }) => (
  <svg width="124" height="30" viewBox="0 0 124 30">
    <defs><linearGradient id={"ch" + id}><stop offset="0" stopColor={color} /><stop offset="1" stopColor="#f3f3f3" /></linearGradient></defs>
    <rect x="1" y="12.500" width="121" height="7" fill={`url(#ch${id})`} stroke="#888" />
    <path d="M103 30V26L108.500 20L114 26V30Z" fill="#a5a5a5" stroke="#777" />
  </svg>
);
const Checker = ({ block, frame }: { block?: boolean; frame?: boolean }) => (
  <svg width="40" height="40" viewBox="0 0 40 40">
    <defs><pattern id="chk" width="10" height="10" patternUnits="userSpaceOnUse"><rect width="10" height="10" fill="#fff" /><path d="M0 0H5V5H0ZM5 5H10V10H5Z" fill="#cfcfcf" /></pattern></defs>
    <rect width="40" height="40" fill="url(#chk)" />
    {block && <rect x="17" y="21" width="18" height="17" fill="#7c7c7c" />}
    {frame && <path d="M26 13H33M34 5V8" stroke="#666" strokeWidth="1.500" />}
  </svg>
);
const SelectedThumb = styled.div`
  width: 49px;
  height: 49px;
  flex: none;
  display: grid;
  place-items: center;
  background:
    linear-gradient(#eef4fb, #eef4fb) 50% 0 / 16px 3px no-repeat,
    linear-gradient(#eef4fb, #eef4fb) 50% 100% / 16px 3px no-repeat,
    linear-gradient(#eef4fb, #eef4fb) 0 50% / 3px 16px no-repeat,
    linear-gradient(#eef4fb, #eef4fb) 100% 50% / 3px 16px no-repeat,
    #666;
  & > svg { outline: 1px solid #777; }
`;
const footIcons: ReactNode[] = [
  <svg width="24" height="16"><path d="M11 8A4 4 0 1 1 9 5M13 8A4 4 0 1 0 15 5M7 8H17" fill="none" stroke="#999" strokeWidth="2.500" /></svg>,
  <svg width="26" height="20"><text x="3" y="14" fontFamily="Liberation Serif, serif" fontStyle="italic" fontWeight="bold" fontSize="19" fill="#333" letterSpacing="-0.5">fx.</text></svg>,
  <svg width="20" height="16"><rect x="1.500" y="1.500" width="17" height="13" fill="#666" stroke="#555" strokeWidth="2" /><circle cx="10" cy="8" r="4.500" fill="#eee" /></svg>,
  <svg width="24" height="16"><circle cx="10" cy="8" r="6.500" fill="#fff" stroke="#555" strokeWidth="2" /><path d="M15 3A7 7 0 0 0 5 13Z" fill="#222" /><rect x="21" y="13" width="3" height="3" fill="#333" /></svg>,
  <svg width="18" height="16"><path d="M2 4H16V13H2Z" fill="#e3e3e3" stroke="#aaa" strokeWidth="1.500" /><path d="M16 4V13.500H4" fill="none" stroke="#555" strokeWidth="2.500" /></svg>,
  <svg width="18" height="16"><path d="M4 2H15V14H4V8Z" fill="#eee" stroke="#bbb" strokeWidth="1.500" /><path d="M15 2V14H4M9 3V9H3" fill="none" stroke="#555" strokeWidth="2" /></svg>,
  <svg width="16" height="17"><path d="M2 4H14M6 2H10" stroke="#444" strokeWidth="2.500" /><path d="M3 6H13L12 16H4Z" fill="#999" stroke="#555" /><path d="M6 7V15M10 7V15" stroke="#444" /></svg>,
];

const Dock = () => (
  <RightDock>
    <DockHead $pl={10}>
      <svg width="60" height="14"><path d="M5.500 0V14H1.500V0ZM43.500 0V14H38.500V0Z" fill="none" stroke="#858585" strokeDasharray="1 1" /><path d="M22 3V11L17 7ZM29 3V11L24 7Z" fill="#d0d0d0" /></svg>
      <Item $gap={287}><Chevrons /></Item>
    </DockHead>
    <DockCols>
      <IconStrip>
        {stripIcons.map((g, i) => <StripGroup key={i} $h={g.h}><StripGrip />{g.icons.map((n, j) => <StripButton key={j}>{n}</StripButton>)}</StripGroup>)}
      </IconStrip>
      <Panels>
        <Panel $h={408}>
          <Tabs items={[["Navigator", 98, 68], ["Histogram", 94, 74], ["Info", 48, 28]]} />
          <NavThumb><Artwork width={309} height={309} viewBox="177 422 1372 1372" thin /></NavThumb>
          <NavFooter>
            <ZoomField><Fit w={37} size={15}>100%</Fit></ZoomField>
            <IconBox $gap={41} $w={30} $h={19}><svg width="16" height="9"><path d="M1 8L5 5L7 6L10 2L15 8Z" fill="#777" stroke="#444" /></svg></IconBox>
            <Item $gap={9}><svg width="100" height="18"><path d="M3 9H97" stroke="#8b8b8b" strokeWidth="5" strokeLinecap="round" /><path d="M44 7A6 6 0 0 1 56 7Q56 12 50 16Q44 12 44 7Z" fill="#72b4f2" stroke="#4b86c6" /><circle cx="50" cy="9" r="3" fill="#b5dcff" /></svg></Item>
            <IconBox $gap={10} $w={30} $h={19}><svg width="24" height="12"><path d="M1 11L7 6L10 7L15 2L18 3L23 11Z" fill="#999" stroke="#444" strokeWidth="1.500" /></svg></IconBox>
            <Item $gap={10}><svg width="12" height="14"><path d="M12 0V14H0Z" fill="#d3d3d3" /></svg></Item>
          </NavFooter>
        </Panel>
        <Panel $h={193}>
          <Tabs items={[["Color", 69, 38], ["Swatches", 85, 65], ["Styles", 62, 41]]} />
          <ColorBody>
            <svg width="44" height="52"><rect x="19" y="25" width="22" height="22" fill="#000" stroke="#aaa" strokeWidth="2" /><rect x="2" y="8" width="25" height="25" fill="#e3e3e3" stroke="#444" strokeWidth="2" /></svg>
            <ColorRows>
              {channels.map(([l, c]) => (
                <ColorRow key={l}><ChannelLabel><Fit w={9}>{l}</Fit></ChannelLabel><Item $gap={4}><ColorSlider id={l} color={c} /></Item><Field $gap={6} $w={51} $h={30}><Fit w={29} size={15}>227</Fit></Field></ColorRow>
              ))}
            </ColorRows>
          </ColorBody>
          <Spectrum><Hues /><SpectrumEnds /></Spectrum>
        </Panel>
        <Panel $h={409}>
          <Tabs items={[["Layers", 75, 45], ["Channels", 88, 66], ["Paths", 58, 38]]} />
          <LayerControls $h={36}>
            <Select $gap={3} $w={144}><Fit w={52}>Normal</Fit><Stepper><Twist /></Stepper></Select>
            <Fit gap={4} w={57}>Opacity:</Fit>
            <PercentBox $gap={4}><Fit w={37}>100%</Fit><PercentArrow><Tri d="right" w={7} h={8} c="#123" /></PercentArrow></PercentBox>
          </LayerControls>
          <LayerControls $h={35}>
            <Fit gap={7} w={36}>Lock:</Fit>
            <LockGroup>
              <LockCell><svg width="16" height="16"><rect x="1.500" y="1.500" width="13" height="13" fill="#eee" stroke="#444" strokeWidth="2" /><path d="M4 4L12 12M12 4L4 12" stroke="#aaa" strokeDasharray="2 2" /></svg></LockCell>
              <LockCell><svg width="18" height="17"><path d="M1 16Q8 16 8 13L17 3L14 1L5 9Q4 13 1 16Z" fill="#777" stroke="#333" strokeWidth="1.700" /></svg></LockCell>
              <LockCell><svg width="16" height="16"><path d="M8 2V14M2 8H14" stroke="#333" strokeWidth="2" /><path d="M8 0L11 4H5ZM8 16L11 12H5ZM0 8L4 5V11ZM16 8L12 5V11Z" fill="#333" /></svg></LockCell>
              <LockCell><svg width="14" height="16"><path d="M3 8Q2 2 7 2Q12 2 11 8" fill="#999" stroke="#333" strokeWidth="2.500" /><rect x="1" y="7" width="12" height="8" fill="#1c1c1c" /></svg></LockCell>
            </LockGroup>
            <Fit gap={41} w={23}>Fill:</Fit>
            <PercentBox $gap={5}><Fit w={37}>100%</Fit><PercentArrow><Tri d="right" w={7} h={8} c="#123" /></PercentArrow></PercentBox>
          </LayerControls>
          <LayerArea>
            <LayerList>
              <LayerRow $h={31}>
                <EyeCol><EyeBox><Eye /></EyeBox></EyeCol>
                <LayerBar $h={31} $pl={5}><Tri d="down" w={13} h={11} c="#666" /><Item $gap={10}><svg width="21" height="18"><path d="M1 4Q1 2 3 2H8L10 4H19V16H1Z" fill="#bcbcbc" stroke="#8b8b8b" /></svg></Item><Fit gap={17} w={51}>Layer 1</Fit></LayerBar>
              </LayerRow>
              <LayerRow $h={130}>
                <EyeCol $pad={16}><EyeBox><Eye /></EyeBox></EyeCol>
                <LayerMain>
                  <LayerBar $h={53} $on><SelectedThumb><Checker frame /></SelectedThumb><Fit gap={8} w={56} weight={700} color="#2a3b55">Layer 2</Fit><FxTag>fx</FxTag><FxToggle><Tri d="up" w={9} h={5} /></FxToggle></LayerBar>
                  <EffectRow $indent={25}><Eye w={17} /><Fit w={46}>Effects</Fit></EffectRow>
                  <EffectRow $indent={44} $line><Item $gap={6}><Eye w={16} /></Item><Fit w={97}>Color Overlay</Fit></EffectRow>
                  <EffectRow $indent={68} $line $h={26}><Item $gap={-18}><Eye w={16} /></Item><Fit w={45}>Stroke</Fit></EffectRow>
                </LayerMain>
              </LayerRow>
              <LayerRow $h={53}>
                <EyeCol $pad={15}><EyeBox><Eye /></EyeBox></EyeCol>
                <LayerBar $h={52}><Thumb>T</Thumb><Fit gap={10} w={110}>Product Callout</Fit></LayerBar>
              </LayerRow>
              <LayerRow $h={90}>
                <EyeCol $pad={15}><EyeBox><Eye /></EyeBox></EyeCol>
                <LayerMain>
                  <LayerBar $h={52}><Thumb><Checker block /></Thumb><Fit gap={10} w={103}>Layer 3 copy 5</Fit><FxTag>fx</FxTag><FxToggle><Tri d="up" w={9} h={5} /></FxToggle></LayerBar>
                  <EffectRow $indent={25} $h={22}><Eye w={17} /><Fit w={46}>Effects</Fit></EffectRow>
                </LayerMain>
              </LayerRow>
            </LayerList>
            <ScrollTrack>
              <ScrollArrow $h={22}><Tri d="up" w={9} h={9} c="#555" /></ScrollArrow>
              <ScrollThumb $h={66} />
              <ScrollArrow $push $h={22}><Tri d="down" w={9} h={9} c="#555" /></ScrollArrow>
            </ScrollTrack>
          </LayerArea>
          <LayerFooter>{footIcons.map((n, i) => <FooterCell key={i}>{n}</FooterCell>)}</LayerFooter>
        </Panel>
      </Panels>
    </DockCols>
  </RightDock>
);

export default function App() {
  return (
    <Slide>
      <Global />
      <Heading>
        <Fit w={468} size={73} weight={500} color="#fff">SITUATIONAL</Fit>
        <Fit gap={20} w={524} size={73} weight={500} color="#fff">SUB–DIVISIONS</Fit>
        <Fit gap={46} w={683} size={49} weight={500} color="#929292">YOUR GRID WITHIN THE GRID</Fit>
      </Heading>
      <Screen>
        <Menu />
        <Options />
        <Body>
          <Tools />
          <DocumentView />
          <Dock />
        </Body>
      </Screen>
    </Slide>
  );
}
